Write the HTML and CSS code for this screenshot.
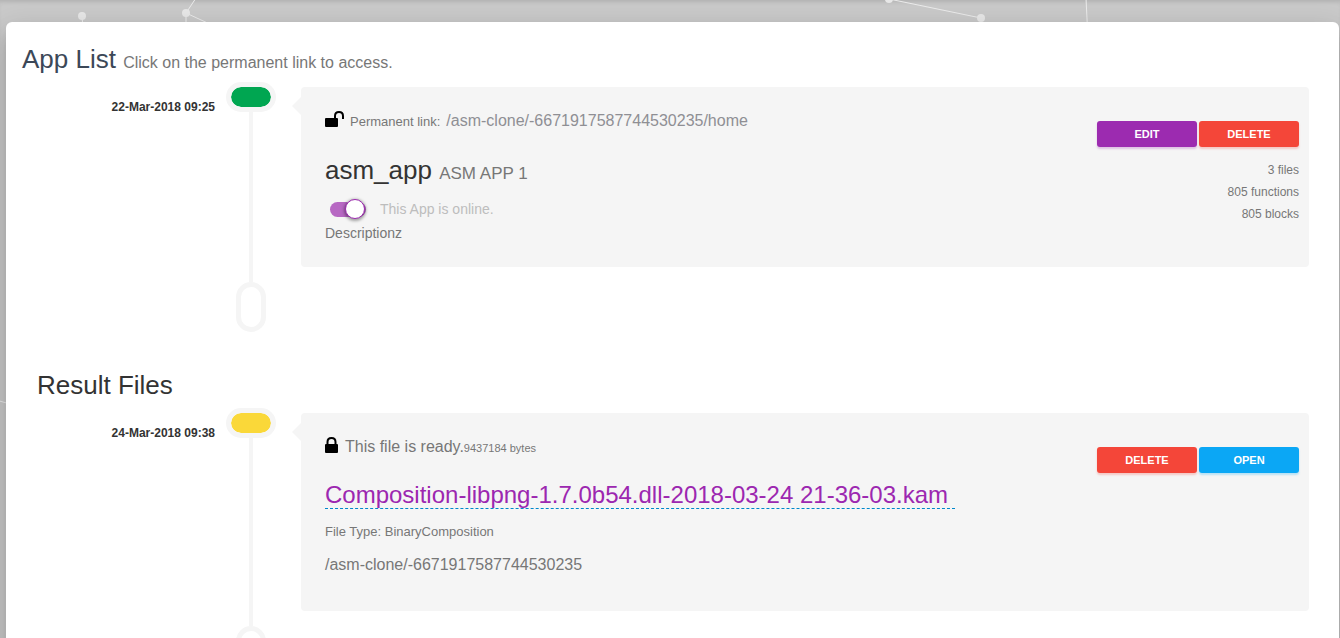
FILE: index.html
```html
<!DOCTYPE html>
<html lang="en">
<head>
<meta charset="utf-8">
<title>App List</title>
<link rel="stylesheet" href="styles.css">
</head>
<body>
<div class="page">
  <svg class="network" aria-hidden="true">
    <g class="network-lines">
      <path d="M82 16L84 40M196 -2L186 13V40M186 13L240 38M889 -1L981 18M1086 -2L1088 40M-4 400L10 404"/>
    </g>
    <g class="network-nodes">
      <circle cx="82" cy="16" r="4"/>
      <circle cx="186" cy="13" r="4"/>
      <circle cx="889" cy="-1" r="4"/>
      <circle cx="981" cy="18" r="4"/>
    </g>
  </svg>
  <main class="card">
    <section>
      <h2 class="title title-app">App List <small class="title-note">Click on the permanent link to access.</small></h2>
      <div class="timeline">
        <time class="date">22-Mar-2018 09:25</time>
        <div class="rail"><span class="badge badge-green"></span></div>
        <article class="panel">
          <div class="details">
            <p class="line">
              <svg class="icon" width="19" height="16" viewBox="0 0 19 16" aria-hidden="true"><rect x="0" y="7" width="13" height="9" rx="1"/><path class="shackle" d="M10 8V5C10 2.500 11.500 1 14 1S18 2.500 18 5V8"/></svg>
              <span class="label">Permanent link:</span>
              <a class="permalink" href="#">/asm-clone/-6671917587744530235/home</a>
            </p>
            <h3 class="name">asm_app <small class="name-note">ASM APP 1</small></h3>
            <label class="switch-row"><input class="switch" type="checkbox" checked><span>This App is online.</span></label>
            <p class="description">Descriptionz</p>
          </div>
          <div class="side">
            <div class="actions">
              <button class="btn btn-purple" type="button">EDIT</button>
              <button class="btn btn-red" type="button">DELETE</button>
            </div>
            <ul class="stats">
              <li>3 files</li>
              <li>805 functions</li>
              <li>805 blocks</li>
            </ul>
          </div>
        </article>
        <span class="cap"></span>
      </div>
    </section>
    <section class="results">
      <h2 class="title title-results">Result Files</h2>
      <div class="timeline">
        <time class="date">24-Mar-2018 09:38</time>
        <div class="rail"><span class="badge badge-yellow"></span></div>
        <article class="panel">
          <div class="details">
            <p class="line">
              <svg class="icon" width="14" height="16" viewBox="0 0 14 16" aria-hidden="true"><rect x="0" y="7" width="13" height="9" rx="1"/><path class="shackle" d="M2.500 8V5C2.500 2.500 4 1 6.500 1S10.500 2.500 10.500 5V8"/></svg>
              <span><span class="status">This file is ready.</span><small class="size">9437184 bytes</small></span>
            </p>
            <h3 class="file"><a class="file-link" href="#">Composition-libpng-1.7.0b54.dll-2018-03-24 21-36-03.kam</a></h3>
            <p class="file-type">File Type: BinaryComposition</p>
            <p class="path">/asm-clone/-6671917587744530235</p>
          </div>
          <div class="side">
            <div class="actions">
              <button class="btn btn-red" type="button">DELETE</button>
              <button class="btn btn-blue" type="button">OPEN</button>
            </div>
          </div>
        </article>
        <span class="cap"></span>
      </div>
    </section>
  </main>
</div>
</body>
</html>
```
FILE: styles.css
```css
*, *::before, *::after { box-sizing: border-box; }

body {
  margin: 0;
  font-family: "Liberation Sans", Arial, sans-serif;
  color: #777;
}

h2, h3, p, ul { margin: 0; padding: 0; }

.page {
  position: relative;
  height: 100vh;
  overflow: hidden;
  padding: 22px 1px 0 6px;
  background: #cacaca;
  box-shadow: inset 0 4px 4px -2px rgba(0, 0, 0, 0.12);
}

.network {
  position: absolute;
  inset: 0;
  width: 100%;
  height: 100%;
}

.network-lines { fill: none; stroke: #ececec; stroke-width: 1; }
.network-nodes { fill: #e8e8e8; }

.card {
  position: relative;
  padding: 20px 30px 24px 16px;
  border-radius: 6px;
  background: #fff;
  box-shadow: 0 16px 24px 2px rgba(0, 0, 0, 0.14), 0 6px 30px 5px rgba(0, 0, 0, 0.08), 0 8px 10px -5px rgba(0, 0, 0, 0.2);
}

.title {
  font-size: 26px;
  font-weight: 400;
  line-height: 34px;
  color: #333;
}

.title-app { color: #3c4858; margin-bottom: 2px; }
.title-note { font-size: 16px; color: #777; }
.results { margin-top: 36px; }
.title-results { margin: 0 0 6px 15px; }

.timeline {
  display: grid;
  grid-template-columns: 193px 50px minmax(0, 1fr);
  column-gap: 11px;
}

.date {
  padding-top: 17px;
  text-align: right;
  font-size: 12px;
  font-weight: 700;
  line-height: 16px;
  color: #333;
}

.rail {
  display: flex;
  flex-direction: column;
  align-items: center;
}

.rail::after {
  content: "";
  flex: 1;
  width: 4px;
  background: #f5f5f5;
}

.badge {
  width: 50px;
  height: 30px;
  border: 5px solid #f5f5f5;
  border-radius: 15px;
}

.badge-green { background: #00a651; background-clip: padding-box; }
.badge-yellow { background: #fad839; background-clip: padding-box; }

.cap {
  grid-column: 2;
  justify-self: center;
  width: 30px;
  height: 50px;
  border: 5px solid #f5f5f5;
  border-radius: 15px;
}

.panel {
  position: relative;
  display: flex;
  justify-content: space-between;
  margin: 5px 0 15px 14px;
  padding: 24px 10px 24px 24px;
  border-radius: 4px;
  background: #f5f5f5;
}

.panel::before {
  content: "";
  position: absolute;
  top: 10px;
  left: -9px;
  border: solid transparent;
  border-width: 9px 9px 9px 0;
  border-right-color: #f5f5f5;
}

.line {
  display: flex;
  align-items: baseline;
  gap: 6px;
  line-height: 20px;
}

.icon { fill: #000; align-self: flex-start; }
.shackle { fill: none; stroke: #000; stroke-width: 2; }
.label { font-size: 13px; }
.permalink { font-size: 16px; color: #8f8f94; text-decoration: none; }

.name {
  margin-top: 22px;
  font-size: 26px;
  font-weight: 400;
  line-height: 32px;
  color: #333;
}

.name-note { font-size: 17px; color: #777; }

.switch-row {
  display: flex;
  align-items: center;
  gap: 14px;
  margin-top: 9px;
  padding-left: 5px;
  font-size: 14px;
  line-height: 20px;
  color: #bdbdbd;
}

.switch {
  appearance: none;
  display: flex;
  align-items: center;
  width: 36px;
  height: 15px;
  margin: 0;
  border-radius: 8px;
  background: #b768c3;
}

.switch::before {
  content: "";
  flex: none;
  width: 20px;
  height: 20px;
  margin-left: 15px;
  border: 1px solid #9c27b0;
  border-radius: 50%;
  background: #fff;
  box-shadow: 0 1px 3px 1px rgba(0, 0, 0, 0.35);
}

.description { margin-top: 4px; font-size: 14px; line-height: 20px; }

.side { flex: none; padding-top: 10px; }
.actions { display: flex; gap: 2px; }

.btn {
  width: 100px;
  height: 26px;
  padding: 0;
  border: 0;
  border-radius: 3px;
  font: 700 11px/16px "Liberation Sans", Arial, sans-serif;
  color: #fff;
}

.btn-purple { background: #9c2bb0; box-shadow: 0 2px 2px rgba(156, 39, 176, 0.25); }
.btn-red { background: #f44639; box-shadow: 0 2px 2px rgba(244, 67, 54, 0.25); }
.btn-blue { background: #0ba7f5; box-shadow: 0 2px 2px rgba(3, 169, 244, 0.25); }

.stats {
  margin-top: 12px;
  list-style: none;
  text-align: right;
  font-size: 12px;
  line-height: 22px;
}

.status { font-size: 16px; }
.size { font-size: 11px; }

.file {
  margin-top: 23px;
  font-size: 24px;
  font-weight: 400;
  line-height: 27px;
}

.file-link {
  display: block;
  padding-right: 7px;
  border-bottom: 1px dashed #0088cc;
  color: #9c27b0;
  text-decoration: none;
}

.file-type { margin-top: 13px; font-size: 13px; line-height: 20px; }
.path { margin: 13px 0 12px; font-size: 16px; line-height: 20px; }
```
